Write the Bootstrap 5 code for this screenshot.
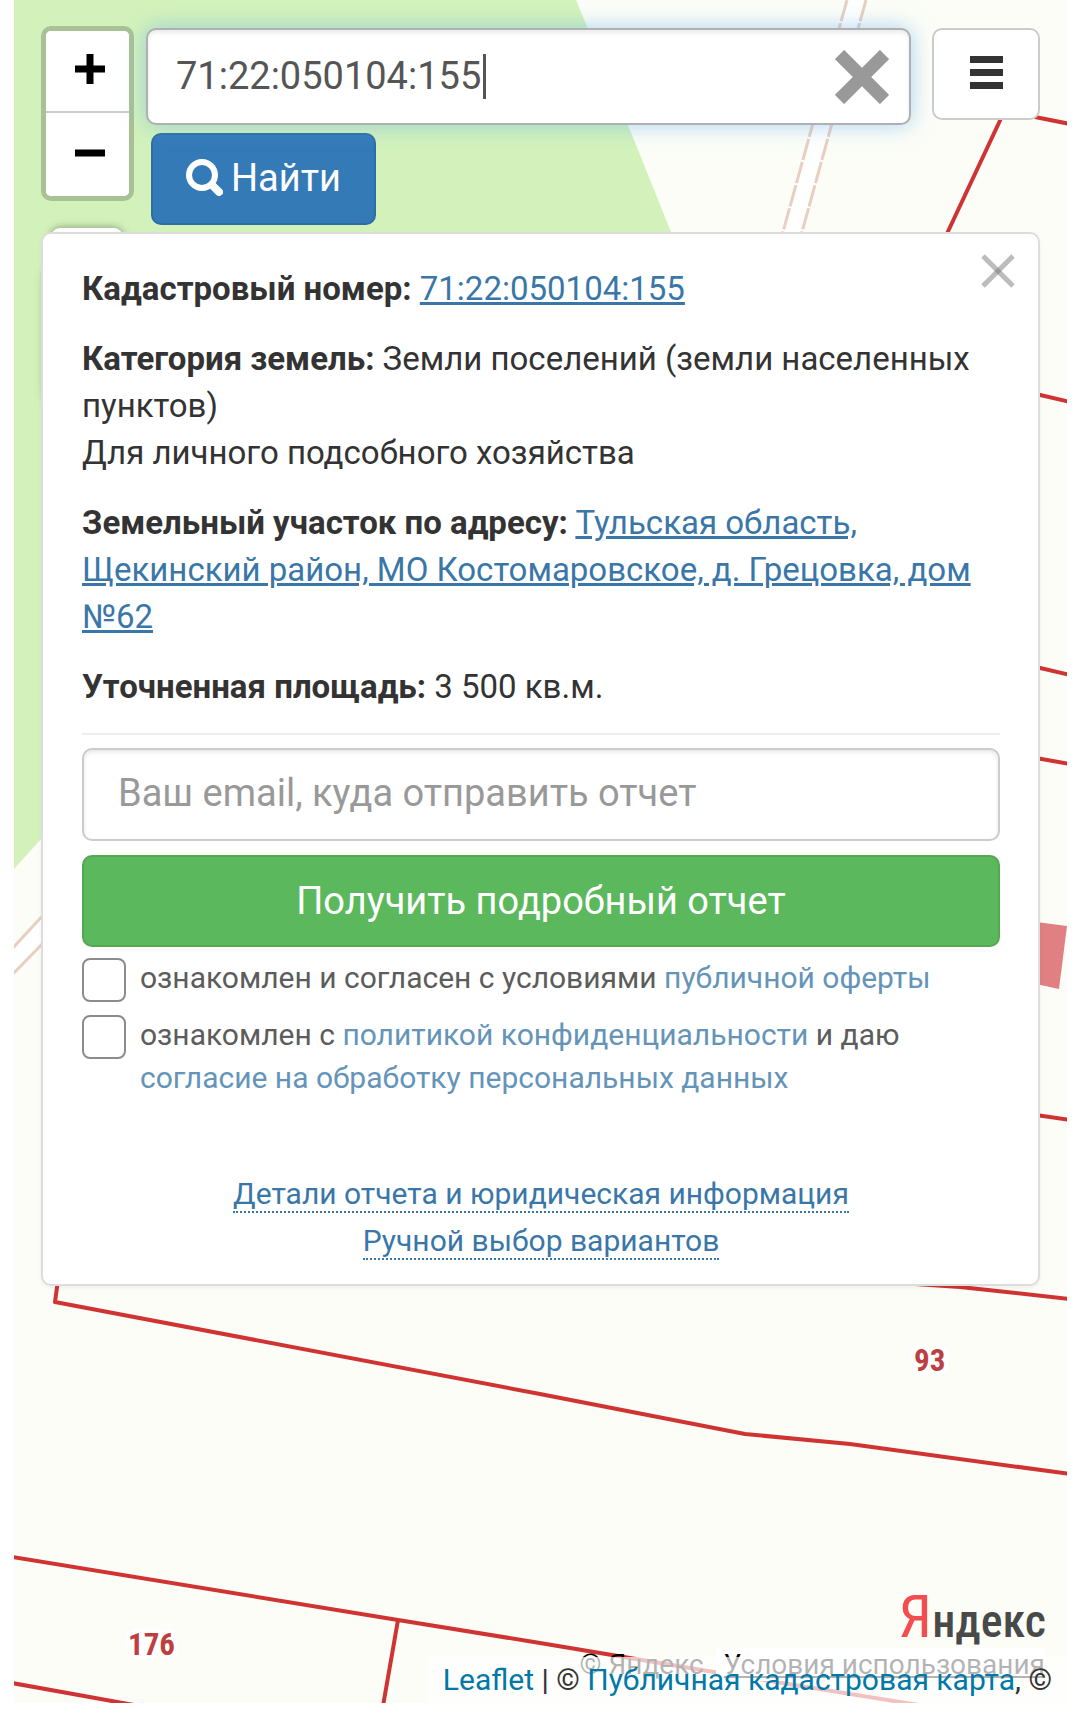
<!DOCTYPE html>
<html lang="ru">
<head>
<meta charset="utf-8">
<meta name="viewport" content="width=device-width, initial-scale=1">
<title>Публичная кадастровая карта</title>
<link href="https://cdn.jsdelivr.net/npm/bootstrap@5.3.0/dist/css/bootstrap.min.css" rel="stylesheet">
<style>
  body { font-family: Roboto, "Noto Sans", sans-serif; font-size: 33px; line-height: 47px; color: #333; background: #fff; }
  a { color: #3a77a8; }
  .map-shell { padding: 0 13px 8px 14px; }
  .map-view { min-height: calc(100vh - 8px); padding: 26px 27px 64px; background: #fcfdf7; isolation: isolate; }
  .map-canvas { z-index: -1; }
  .parcel { fill: none; stroke: #cf3433; stroke-width: 4; stroke-linejoin: round; }
  .road-edge { fill: none; stroke: #e8cfc0; stroke-width: 3; stroke-dasharray: 22 2; }
  .parcel-no { font: bold 31px "Roboto Condensed", "Liberation Sans Narrow", Roboto, sans-serif; fill: #bd3f3f; stroke: #fff; stroke-width: 9; stroke-linejoin: round; paint-order: stroke; }

  .top-bar { min-height: 199px; margin-bottom: 7px; }
  .zoom-box { width: 93px; border: 5px solid rgba(0,0,0,.2); border-radius: 10px; background: #fff; background-clip: padding-box; overflow: hidden; }
  .zoom-box button { height: 80px; border: 0; background: #fff; padding: 0 0 4px 5px; }
  .zoom-box button + button { border-top: 2px solid #ccc; height: 85px; }
  .layer-tab { z-index: -1; left: 37px; top: 228px; width: 72px; height: 60px; background: #fff; border-radius: 9px; box-shadow: 0 0 8px rgba(0,0,0,.4); }
  .side-tab { z-index: -1; left: 30px; top: 270px; width: 72px; height: 130px; background: #fff; border-radius: 9px; box-shadow: 0 0 12px rgba(0,0,0,.2); }

  .search-col { margin: 2px 21px 0 12px; }
  .big-input { height: 97px; padding: 0 120px 2px 28px; border: 2px solid #ccc; border-radius: 10px; font-size: 38px; color: #555; box-shadow: inset 0 2px 4px rgba(0,0,0,.1); }
  .big-input::placeholder { color: #999; opacity: 1; }
  .query-input, .query-input:focus { border-color: #b0b0b0; box-shadow: inset 0 3px 4px rgba(0,0,0,.08), 0 0 22px rgba(102,175,233,.55); color: #555; }
  .caret-bar { left: 337px; top: 26px; width: 3px; height: 45px; background: #555; }
  .clear-btn { right: 22px; top: 22px; line-height: 0; }
  .find-btn { height: 92px; margin: 8px 0 0 5px; padding: 0 33px 2px; font-size: 38px; border-radius: 10px; --bs-btn-bg: #337ab7; --bs-btn-border-color: #2e6da4; --bs-btn-border-width: 2px; }
  .menu-btn { width: 108px; height: 92px; margin-top: 2px; padding: 0 0 4px; border: 2px solid #ccc; border-radius: 10px; background: #fff; }

  .info-panel { border: 2px solid #ddd; border-radius: 10px; padding: 31px 38px 20px 39px; box-shadow: 0 2px 4px rgba(0,0,0,.05); }
  .info-panel p { margin-bottom: 23px; }
  .info-panel hr { margin: 0 0 13px; border-top: 2px solid #eee; opacity: 1; }
  .panel-close { right: 23px; top: 20px; line-height: 0; }
  .mail-input { height: 93px; padding: 0 34px 4px; margin-bottom: 14px; }
  .report-btn { height: 92px; font-size: 38px; border-radius: 10px; padding: 0; margin-bottom: 9px; --bs-btn-bg: #5cb85c; --bs-btn-border-color: #54a854; --bs-btn-border-width: 2px; }
  .consents { gap: 11px; font-size: 30px; line-height: 43px; color: #5c5c5c; margin-bottom: 71px; }
  .consents a { color: #6594b9; text-decoration: none; }
  .consents .form-check-input { width: 44px; height: 44px; margin: 2px 14px 0 0; border: 2px solid #8c8c8c; border-radius: 8px; }
  .more-links { font-size: 30px; }
  .more-links a { text-decoration: none; border-bottom: 2px dotted #3a77a8; }

  .ya-logo { right: 21px; bottom: 52px; font: 500 46px/60px "Roboto Condensed", "Liberation Sans Narrow", "DejaVu Sans Condensed", sans-serif; color: #484a4a; }
  .ya-logo span { color: #f44d50; font-size: 60px; font-weight: 400; }
  .ya-terms { right: 22px; bottom: 18px; font-size: 28px; line-height: 40px; color: #000; }
  .ya-terms a { color: #000; background: #fff; margin-left: 12px; padding-left: 8px; }
  .attribution { right: 0; bottom: 0; padding: 0 15px; height: 46px; font-size: 30px; line-height: 46px; background: rgba(255,255,255,.7); white-space: nowrap; }
  .attribution a { color: #0078a8; text-decoration: none; }
</style>
</head>
<body>
<main class="map-shell">
  <div class="map-view position-relative overflow-hidden d-flex flex-column">
    <svg class="map-canvas position-absolute top-0 start-0 w-100 h-100" viewBox="14 0 1053 1703" preserveAspectRatio="xMidYMin slice" aria-hidden="true">
      <path fill="#d3f2bb" d="M14 0H576L628 125 671 232 760 450 42 838 14 869Z"/>
      <path fill="#fff" d="M847 0H866L802 232 760 390 42 944 14 973V947L42 916 740 390 783 232Z"/>
      <path class="road-edge" d="M847 0 783 232 740 390M866 0 802 232 760 390"/>
      <path fill="none" stroke="#e8cfc0" stroke-width="3" d="M12 949 46 912M12 975 46 940"/>
      <path fill="#e08082" d="M1036 922 1067 926 1059 989 1036 984Z"/>
      <path class="parcel" d="M1004 112 944 240M1030 116 1070 124M1036 394 1070 402M1036 667 1070 675M1036 758 1070 764M1036 1115 1070 1120M58 1280 55 1302 540 1394 745 1434 850 1444 1070 1474M915 1284 960 1287 1070 1299M12 1557 398 1620 540 1643 720 1673 925 1706M398 1620 383 1706M12 1683 145 1707"/>
      <text class="parcel-no" x="128" y="1655">176</text>
      <text class="parcel-no" x="914" y="1371">93</text>
    </svg>
    <div class="layer-tab position-absolute"></div>
    <div class="side-tab position-absolute"></div>

    <header class="top-bar d-flex align-items-start">
      <div class="zoom-box d-flex flex-column flex-shrink-0">
        <button type="button" aria-label="Приблизить" class="d-flex align-items-center justify-content-center">
          <svg width="30" height="30" viewBox="0 0 30 30"><path d="M15 0V30M0 15H30" stroke="#000" stroke-width="7"/></svg>
        </button>
        <button type="button" aria-label="Отдалить" class="d-flex align-items-center justify-content-center">
          <svg width="30" height="30" viewBox="0 0 30 30"><path d="M0 15H30" stroke="#000" stroke-width="7"/></svg>
        </button>
      </div>
      <form class="search-col flex-grow-1">
        <div class="position-relative">
          <input type="text" class="form-control big-input query-input" aria-label="Кадастровый номер" value="71:22:050104:155">
          <span class="caret-bar position-absolute"></span>
          <button type="button" class="clear-btn position-absolute border-0 bg-transparent p-0" aria-label="Очистить">
            <svg width="54" height="54" viewBox="0 0 54 54"><path d="M4.500 4.500 49.500 49.500M49.500 4.500 4.500 49.500" stroke="#999" stroke-width="13"/></svg>
          </button>
        </div>
        <button type="button" class="btn btn-primary find-btn d-inline-flex align-items-center">
          <svg class="me-2" width="37" height="38" viewBox="0 0 37 38" fill="none" stroke="#fff"><circle cx="16" cy="16" r="13" stroke-width="6"/><path d="M26 26 33 33" stroke-width="8" stroke-linecap="round"/></svg>
          Найти
        </button>
      </form>
      <button type="button" class="menu-btn flex-shrink-0" aria-label="Меню">
        <svg class="d-block mx-auto" width="33" height="33" viewBox="0 0 33 33"><path d="M0 3.500H33M0 16.500H33M0 29.500H33" stroke="#333" stroke-width="7"/></svg>
      </button>
    </header>

    <section class="info-panel bg-white position-relative">
      <button type="button" class="panel-close position-absolute border-0 bg-transparent p-0" aria-label="Закрыть">
        <svg width="34" height="34" viewBox="0 0 34 34"><path d="M2 2 32 32M32 2 2 32" stroke="#bcbcbc" stroke-width="5"/><path d="M17 13.500 20.500 17 17 20.500 13.500 17Z" fill="#999"/></svg>
      </button>
      <p><b>Кадастровый номер:</b> <a href="#">71:22:050104:155</a></p>
      <p><b>Категория земель:</b> Земли поселений (земли населенных пунктов)<br>Для личного подсобного хозяйства</p>
      <p><b>Земельный участок по адресу:</b> <a href="#">Тульская область, Щекинский район, МО Костомаровское, д. Грецовка, дом №62</a></p>
      <p><b>Уточненная площадь:</b> 3 500 кв.м.</p>
      <hr>
      <form>
        <input type="email" class="form-control big-input mail-input" aria-label="Email" placeholder="Ваш email, куда отправить отчет">
        <button type="button" class="btn btn-success report-btn w-100">Получить подробный отчет</button>
        <div class="consents d-flex flex-column">
          <div class="d-flex align-items-start">
            <input class="form-check-input flex-shrink-0" type="checkbox" id="offer">
            <label for="offer">ознакомлен и согласен с условиями <a href="#">публичной оферты</a></label>
          </div>
          <div class="d-flex align-items-start">
            <input class="form-check-input flex-shrink-0" type="checkbox" id="privacy">
            <label for="privacy">ознакомлен с <a href="#">политикой конфиденциальности</a> и даю <a href="#">согласие на обработку персональных данных</a></label>
          </div>
        </div>
      </form>
      <div class="more-links text-center">
        <a href="#">Детали отчета и юридическая информация</a><br>
        <a href="#">Ручной выбор вариантов</a>
      </div>
    </section>

    <div class="ya-logo position-absolute"><span>Я</span>ндекс</div>
    <div class="ya-terms position-absolute">© Яндекс<a href="#">Условия использования</a></div>
    <footer class="attribution position-absolute"><a href="#">Leaflet</a> | © <a href="#">Публичная кадастровая карта</a>, ©</footer>
  </div>
</main>
<script src="https://cdn.jsdelivr.net/npm/bootstrap@5.3.0/dist/js/bootstrap.bundle.min.js"></script>
</body>
</html>
